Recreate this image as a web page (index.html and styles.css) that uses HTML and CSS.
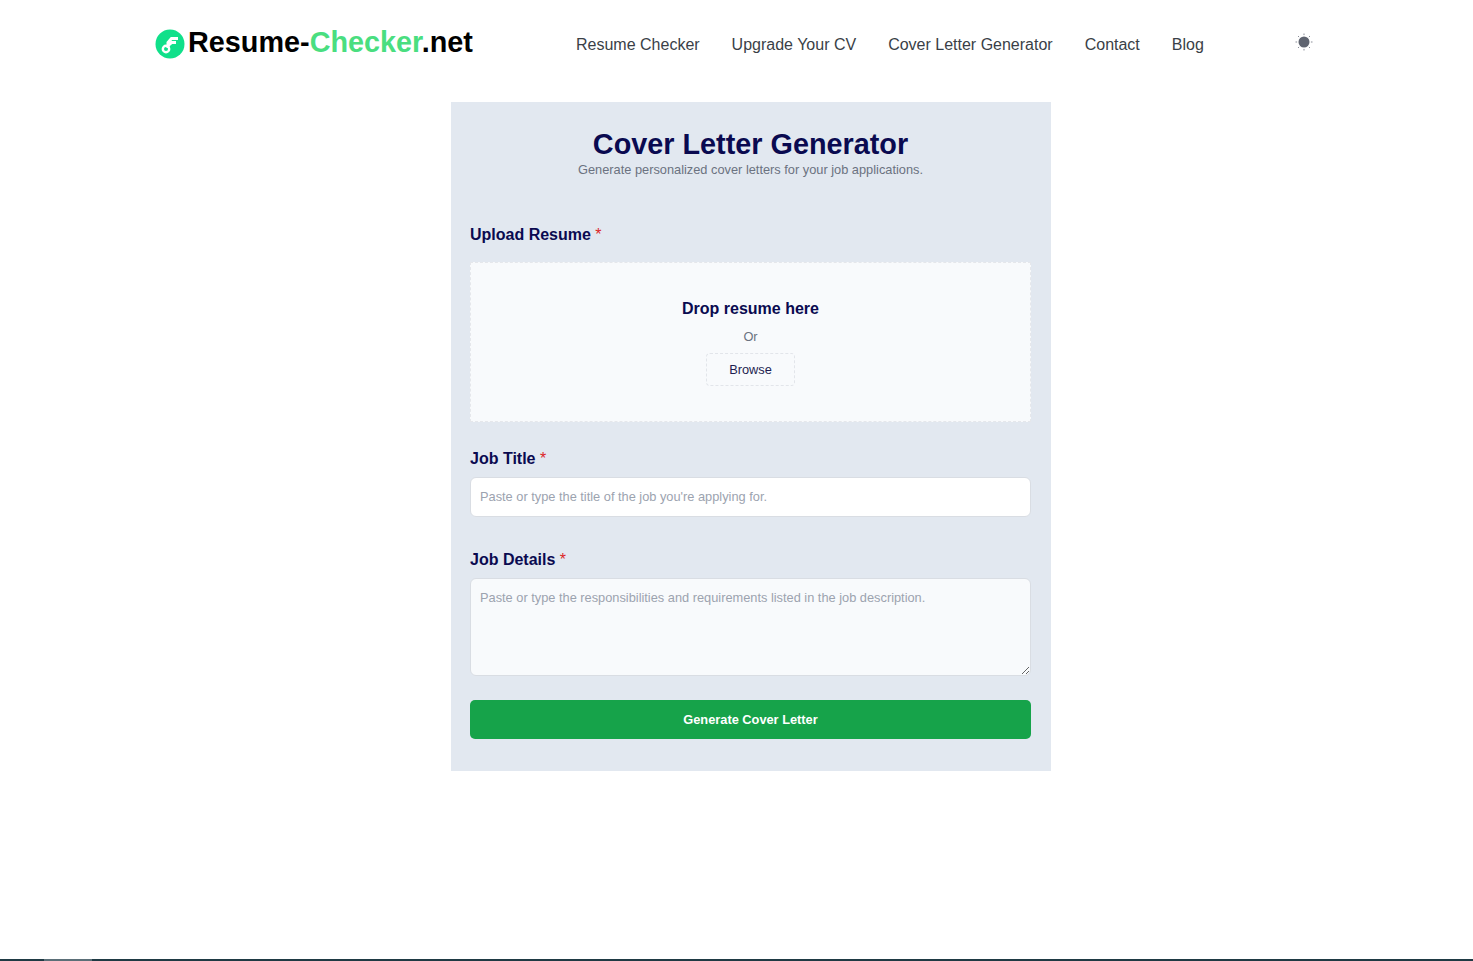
FILE: index.html
```html
<!DOCTYPE html>
<html lang="en">
<head>
    <meta charset="UTF-8">
    <meta name="viewport" content="width=device-width, initial-scale=1.0">
    <title>Cover Letter Generator</title>
    <link rel="stylesheet" href="styles.css">
</head>
<body>
    <header class="header">
        <a class="logo" href="#">
            <svg class="logo-icon" viewBox="0 0 30 30" width="30" height="30">
                <circle cx="15" cy="15" r="14.5" fill="#10e08a"/>
                <path d="M13 19V13.5L16.5 9.5H23" fill="none" stroke="#fff" stroke-width="3"/>
                <path d="M13 16.5L16.5 13.5H21" fill="none" stroke="#fff" stroke-width="3"/>
                <circle cx="11" cy="20" r="3.2" fill="none" stroke="#fff" stroke-width="2.4"/>
            </svg>
            <span class="logo-text">Resume-<span class="logo-green">Checker</span>.net</span>
        </a>
        <nav class="nav">
            <a href="#">Resume Checker</a>
            <a href="#">Upgrade Your CV</a>
            <a href="#">Cover Letter Generator</a>
            <a href="#">Contact</a>
            <a href="#">Blog</a>
        </nav>
        <button class="theme-toggle" aria-label="Toggle theme">
            <svg viewBox="0 0 20 20" width="20" height="20">
                <circle cx="10" cy="10" r="5.5" fill="#5f6470"/>
                <path d="M10 1.5v1.6M10 16.9v1.6M1.5 10h1.6M16.9 10h1.6M4 4l1.1 1.1M14.9 14.9L16 16M4 16l1.1-1.1M14.9 5.1L16 4" stroke="#8b8f99" stroke-width="1"/>
            </svg>
        </button>
    </header>

    <main class="main">
        <form class="card">
            <h1>Cover Letter Generator</h1>
            <p class="subtitle">Generate personalized cover letters for your job applications.</p>

            <label class="label label-upload">Upload Resume <span class="req">*</span></label>
            <div class="dropzone">
                <div class="drop-title">Drop resume here</div>
                <div class="drop-or">Or</div>
                <button type="button" class="browse">Browse</button>
            </div>

            <label class="label label-job" for="jobTitle">Job Title <span class="req">*</span></label>
            <input class="field" id="jobTitle" type="text" placeholder="Paste or type the title of the job you're applying for.">

            <label class="label label-details" for="jobDetails">Job Details <span class="req">*</span></label>
            <textarea class="field details" id="jobDetails" placeholder="Paste or type the responsibilities and requirements listed in the job description."></textarea>

            <button type="button" class="generate">Generate Cover Letter</button>
        </form>
    </main>

    <div class="bottom-bar"><span class="bottom-thumb"></span></div>
</body>
</html>
```

FILE: styles.css
```css
* {
    box-sizing: border-box;
}
html, body {
    height: 100%;
}
body {
    margin: 0;
    display: flex;
    flex-direction: column;
    background: #fff;
    font-family: "Liberation Sans", Arial, sans-serif;
    overflow: hidden;
}
a {
    text-decoration: none;
}

.header {
    display: flex;
    align-items: center;
    height: 84px;
    padding-left: 155px;
}
.logo {
    display: flex;
    align-items: center;
    gap: 3px;
    width: 421px;
    margin-top: 1px;
    color: #000;
}
.logo-icon {
    flex: none;
    margin-top: 2px;
}
.logo-text {
    font-size: 28.8px;
    font-weight: 700;
}
.logo-green {
    color: #4ade80;
}
.nav {
    display: flex;
    gap: 32px;
    width: 718px;
    margin-top: 5px;
}
.nav a {
    font-size: 16px;
    color: #3a3f47;
}
.theme-toggle {
    display: flex;
    padding: 0;
    background: none;
    border: none;
}

.main {
    display: flex;
    justify-content: center;
    flex: 1;
    padding: 18px 0 0 29px;
}
.card {
    display: flex;
    flex-direction: column;
    width: 600px;
    height: 669px;
    padding: 24px 20px 0 19px;
    background: #e2e8f0;
}
h1 {
    margin: 0;
    font-size: 28.8px;
    line-height: 36px;
    font-weight: 700;
    text-align: center;
    color: #0a0a50;
}
.subtitle {
    margin: 0;
    font-size: 12.8px;
    line-height: 16px;
    text-align: center;
    color: #6b7280;
}
.label {
    display: block;
    font-size: 16px;
    line-height: 24px;
    font-weight: 700;
    color: #0a0a50;
}
.req {
    font-weight: 400;
    color: #dc2626;
}
.label-upload {
    margin-top: 45px;
}
.label-job {
    margin-top: 25px;
}
.label-details {
    margin-top: 31px;
}
.dropzone {
    display: flex;
    flex-direction: column;
    align-items: center;
    height: 160px;
    margin-top: 15px;
    padding-top: 34px;
    background: #f8fafc;
    border: 1px dashed #e5e7eb;
}
.drop-title {
    font-size: 16px;
    line-height: 24px;
    font-weight: 700;
    color: #0a0a50;
}
.drop-or {
    margin-top: 8px;
    font-size: 12.8px;
    line-height: 16px;
    color: #6b7280;
}
.browse {
    width: 89px;
    height: 33px;
    margin-top: 8px;
    background: #f8fafc;
    border: 1px dashed #e2e5ea;
    border-radius: 4px;
    font: 12.8px "Liberation Sans", Arial, sans-serif;
    color: #1e1e50;
}
.field {
    display: block;
    width: 100%;
    margin-top: 6px;
    padding: 10px 9px;
    background: #fff;
    border: 1px solid #d9dde3;
    border-radius: 6px;
    font: 12.8px/18px "Liberation Sans", Arial, sans-serif;
    outline: none;
}
.field::placeholder {
    color: #9ca3af;
}
input.field {
    height: 40px;
    padding: 8px 9px 10px;
}
.details {
    height: 98px;
    background: #f8fafc;
}
.generate {
    width: 561px;
    height: 39px;
    margin-top: 24px;
    background: #16a34a;
    border: none;
    border-radius: 5px;
    font: 700 12.8px "Liberation Sans", Arial, sans-serif;
    color: #fff;
}

.bottom-bar {
    height: 2px;
    background: #1f3a44;
}
.bottom-thumb {
    display: block;
    width: 48px;
    height: 2px;
    margin-left: 44px;
    background: #5b6f78;
}
```
